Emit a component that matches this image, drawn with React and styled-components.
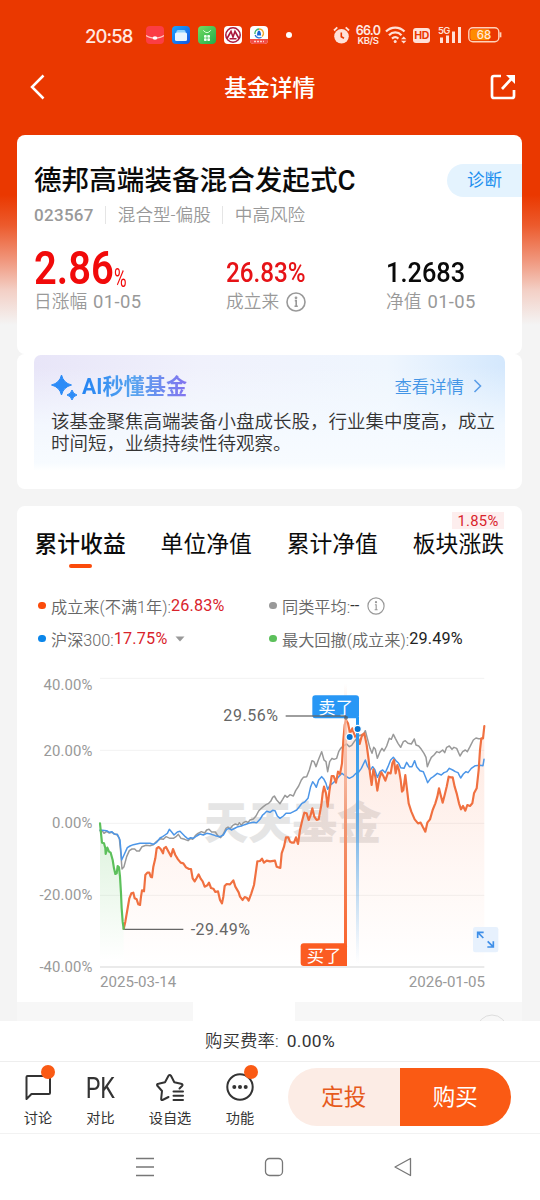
import React from "react";
import styled, { createGlobalStyle } from "styled-components";

const Global = createGlobalStyle`
  *{box-sizing:border-box}
  html,body{margin:0;padding:0;background:#f4f4f4}
  body{font-family:Roboto,"Noto Sans CJK SC",sans-serif;width:540px;height:1200px;overflow:hidden}
`;

const Phone = styled.div`
  width:540px;height:1200px;display:flex;flex-direction:column;overflow:hidden;
  background:linear-gradient(#ea3800 0,#ea3800 195px,#ec5a2c 225px,#f0967c 260px,#f3cfc5 290px,#f4f4f4 325px,#f4f4f4 100%);
`;
const StatusBar = styled.div`
  height:57px;flex:none;display:flex;align-items:center;padding:13px 38px 0 85px;color:#ffe9e2;
`;
const Clock = styled.div`
  width:61px;font:500 18.5px/24px Inter,sans-serif;letter-spacing:-.9px;white-space:nowrap;margin-top:1px;
`;
const AppIcons = styled.div`
  display:flex;gap:8px;align-items:center;
`;
const Dot = styled.i`
  display:block;width:6px;height:6px;border-radius:50%;background:#fff;margin-left:18px;
`;
const Signals = styled.div`
  display:flex;align-items:center;margin-left:auto;width:169px;
`;
const Speed = styled.div`
  display:flex;flex-direction:column;align-items:center;
  font:600 12.5px/11px Inter,sans-serif;letter-spacing:-.7px;width:26px;margin:0 4px 0 5px;
  small{font-size:9.5px;line-height:10px;letter-spacing:-.4px}
`;
const Header = styled.header`
  height:60px;flex:none;display:flex;align-items:center;justify-content:space-between;padding:0 24.5px 0 29px;
  color:#fff;
  h1{margin:3px 5px 0 0;font-size:22.8px;font-weight:500;line-height:30px}
`;
const Scroll = styled.main`
  flex:1;min-height:0;overflow:hidden;padding:17.5px 18px 0 17px;
`;
const Card = styled.section`
  width:505px;height:${p => p.$h}px;background:#fff;border-radius:${p => p.$r || "8px"};
  margin-bottom:${p => p.$gap || 0}px;overflow:hidden;
`;
const TitleRow = styled.div`
  display:flex;justify-content:space-between;align-items:flex-start;padding:29px 0 0 17px;
  h2{margin:0;font-size:27.6px;line-height:33px;font-weight:500;color:#0a0a0a;white-space:nowrap}
`;
const Diagnose = styled.div`
  width:75px;height:33px;border-radius:17px 0 0 17px;background:#e4f3fe;color:#1d8fee;
  font-size:17.5px;line-height:32px;padding-left:20px;
`;
const Meta = styled.div`
  display:flex;align-items:center;padding:8px 0 0 17px;height:28px;color:#999;line-height:20px;
  b{font-weight:500;letter-spacing:.3px;font-size:17px}
  span{border-left:1px solid #e5e5e5;margin-left:11.500px;padding-left:11.500px;height:18px;line-height:18px;font-size:17.6px;font-weight:350}
`;
const Stats = styled.div`
  display:grid;grid-template-columns:192px 160px 1fr;padding:19px 0 0 17px;
`;
const Figure = styled.div`
  height:46px;display:flex;align-items:flex-end;font-weight:${p => (p.$big ? 600 : 500)};
  color:${p => p.$color};
  font-size:${p => (p.$big ? 47 : 28.5)}px;line-height:${p => (p.$big ? 45 : 35)}px;
  span{display:block;transform-origin:0 50%;transform:scaleX(${p => p.$sx});white-space:nowrap}
  small{font-size:26px;line-height:24px;font-weight:400;margin-left:-14px;transform:scaleX(.66);transform-origin:0 50%}
`;
const Caption = styled.div`
  display:flex;align-items:center;gap:7px;color:#999;font-size:17.7px;line-height:22px;font-weight:350;white-space:nowrap;margin-top:1px;
  span{font-weight:400;font-size:18.4px;letter-spacing:.4px;margin-left:-1px}
`;
const AiPanel = styled.div`
  margin:1px 17px 0;height:116px;border-radius:7px 7px 0 0;padding:19px 0 0 17px;
  background:linear-gradient(rgba(255,255,255,0) 10%,rgba(245,250,255,.85) 60%,rgba(247,251,255,1) 93%,#fff),
   linear-gradient(90deg,#e8e5f8 0,#f0f1fc 35%,#eff6fe 75%,#d4e8fd);
`;
const AiHead = styled.div`
  display:flex;align-items:center;height:26px;
`;
const AiTitle = styled.div`
  margin-left:5px;font-size:21.2px;font-weight:700;line-height:26px;color:transparent;margin-top:1px;
  background:linear-gradient(90deg,#2484f3,#58a4ef 50%,#8373ef);background-clip:text;-webkit-background-clip:text;
`;
const More = styled.div`
  margin:-2px 23px 0 auto;display:flex;align-items:center;gap:9px;color:#4395e6;font-size:17.4px;font-weight:350;
`;
const AiText = styled.p`
  margin:11px 0 0;width:460px;font-size:18.5px;line-height:22px;color:#333;font-weight:350;white-space:nowrap;
`;
const Tabs = styled.div`
  display:flex;justify-content:space-between;padding:24.500px 18px 0 17.5px;height:66px;
`;
const Tab = styled.div`
  position:relative;font-size:22.8px;line-height:28px;color:#0b0b0b;font-weight:${p => (p.$on ? 500 : 400)};
  display:flex;flex-direction:column;align-items:center;
  i{width:23px;height:4px;border-radius:2px;background:#fb4b0b;margin-top:5.500px}
`;
const TabBadge = styled.em`
  position:absolute;right:0;top:-18.500px;width:52px;height:17px;background:#fdeeee;color:#d9232b;
  font:400 14.8px/18px Roboto,sans-serif;text-align:center;letter-spacing:.3px;
`;
const Legend = styled.div`
  display:grid;grid-template-columns:231px 1fr;grid-auto-rows:33px;align-items:center;padding:17px 0 0 21px;
`;
const LegendItem = styled.div`
  display:flex;align-items:center;color:#666;font-size:16.2px;font-weight:350;white-space:nowrap;
  &::before{content:"";width:7.500px;height:7.500px;border-radius:50%;background:${p => p.$dot};margin-right:5.500px}
  b{font-weight:400;color:${p => p.$value};letter-spacing:.2px}
  svg{margin-left:7px}
`;
const ChartBox = styled.div`
  display:flex;margin-top:15px;height:303px;
`;
const Axis = styled.div`
  width:78px;flex:none;display:flex;flex-direction:column;text-align:right;color:#999;font-size:14.9px;line-height:16px;
  padding:6.500px 2.500px 0 0;letter-spacing:.1px;
  span{height:72.2px;flex:none}
  span:first-child{height:66px}
  span:last-child{height:16px}
`;
const Plot = styled.div`
  width:410px;flex:none;margin-left:-5px;
  svg{display:block}
`;
const Dates = styled.div`
  display:flex;justify-content:space-between;padding:0 37px 0 83px;color:#999;font-size:15.1px;line-height:18px;
`;
const NextStrip = styled.div`
  width:505px;height:20px;display:flex;background:#f7f7f7;justify-content:space-between;
  &::before{content:"";width:102px;margin-left:176px;background:#fff}
  svg{margin-right:14px;margin-top:12px}
`;
const Fee = styled.div`
  height:41px;flex:none;background:#fff;text-align:center;font-size:17.4px;line-height:41px;color:#333;font-weight:350;
  border-bottom:1px solid #eee;letter-spacing:.1px;
  span{margin-left:8px;font-weight:400;letter-spacing:.3px}
`;
const ActionBar = styled.div`
  height:72px;flex:none;background:#fff;border-bottom:1px solid #f2f2f2;display:flex;padding:0 29px 0 3px;align-items:center;
`;
const Action = styled.div`
  position:relative;width:${p => p.$w || 70}px;display:flex;flex-direction:column;align-items:center;color:#333;
  font-size:14.2px;line-height:20px;gap:5px;margin-top:2px;
`;
const Pk = styled.div`
  height:34px;font-size:29px;line-height:39px;transform:scaleX(.8);
`;
const RedDot = styled.i`
  position:absolute;width:14px;height:14px;border-radius:50%;background:#fa5a14;top:-4.500px;left:${p => p.$x}px;
`;
const Buy = styled.div`
  margin:-1px 0 0 auto;width:223px;height:58px;border-radius:29px;overflow:hidden;display:flex;
  div{flex:1;background:#fcece5;color:#e65a1c;text-align:center;font-size:22.5px;line-height:58px}
  div + div{background:#fa5a14;color:#fff}
`;
const SystemNav = styled.nav`
  height:66px;flex:none;background:#fff;display:flex;align-items:center;justify-content:space-between;padding:0 127px 0 135px;
`;

const Info = ({ s = 20, w = 1.6 }) => (
  <svg width={s} height={s} viewBox="0 0 20 20" fill="none" stroke="#999" strokeWidth={w}>
    <circle cx="10" cy="10" r="9" /><path d="M8.8 8.6H10.2V14.2M8.5 14.2H11.8" /><circle cx="10" cy="5.8" r=".6" fill="#999" />
  </svg>
);

const AppIcon = ({ kind }) => (
  <svg width="18" height="18" viewBox="0 0 18 18">
    <defs>
      <linearGradient id="ic-blue" x1="0" y1="0" x2="1" y2="1"><stop stopColor="#1ba4ff" /><stop offset="1" stopColor="#1455e0" /></linearGradient>
      <linearGradient id="ic-green" x1="0" y1="0" x2="1" y2="1"><stop stopColor="#73dc62" /><stop offset="1" stopColor="#1fad4b" /></linearGradient>
    </defs>
    {kind === "wallet" && <><rect width="18" height="18" rx="4" fill="#fb3d44" /><path d="M0 9.5C4 13 14 13 18 9.5" fill="none" stroke="#ffc9c0" strokeWidth="1.2" /><ellipse cx="9" cy="12" rx="2.4" ry="1.8" fill="#fff" /></>}
    {kind === "files" && <><rect width="18" height="18" rx="4" fill="url(#ic-blue)" /><rect x="4.5" y="4" width="9" height="6" rx="1.5" fill="#8fd2ff" /><rect x="3" y="6.5" width="12" height="8.5" rx="1.5" fill="#e8f5ff" /></>}
    {kind === "store" && <><rect width="18" height="18" rx="4" fill="url(#ic-green)" /><path d="M5.2 4.3Q9 9 12.8 4.3" fill="none" stroke="#d8ffd4" /><g fill="#effff0"><rect x="6" y="9" width="2.7" height="2.7" rx=".8" /><rect x="9.3" y="9" width="2.7" height="2.7" rx=".8" /><rect x="6" y="12.3" width="2.7" height="2.7" rx=".8" /><rect x="9.3" y="12.3" width="2.7" height="2.7" rx=".8" /></g></>}
    {kind === "bank" && <><rect width="18" height="18" rx="4" fill="#fff" /><circle cx="9" cy="9" r="7.2" fill="none" stroke="#a9193d" strokeWidth="1.5" /><path d="M3 12.5L7 5.5 9 11 11 5.5 15 12.5M5.5 12.7H12.5" fill="none" stroke="#a9193d" strokeWidth="1.6" /></>}
    {kind === "fund" && <><rect width="18" height="18" rx="4" fill="#fff" /><path d="M0 13H18V14A4 4 0 0 1 14 18H4A4 4 0 0 1 0 14Z" fill="#f34d45" /><path d="M5 8A4.3 4.3 0 0 1 9 3" stroke="#3cb371" fill="none" strokeWidth="1.3" /><path d="M9 3A4.3 4.3 0 0 1 12 10.5" stroke="#f2a72e" fill="none" strokeWidth="1.3" /><path d="M5.2 9A4.3 4.3 0 0 0 11.5 11.3" stroke="#2573d9" fill="none" strokeWidth="1.3" /><path d="M9 4.500Q11 5 11 9.500H7Q7 5 9 4.500Z" fill="#1766d8" /><path d="M4 15.5H14" stroke="#ffd0ca" strokeWidth="1.5" strokeDasharray="2 1" /></>}
  </svg>
);

const Alarm = () => (
  <svg width="17" height="18" viewBox="0 0 17 18"><circle cx="8.5" cy="10.3" r="7.3" fill="#ffe1d8" /><path d="M1 4.5L4.3 1.3M16 4.5L12.7 1.3" stroke="#ffe1d8" strokeWidth="1.8" /><path d="M8.3 6.5V10.8L11 12.3" fill="none" stroke="#ea3800" strokeWidth="1.6" /></svg>
);
const Wifi = () => (
  <svg width="22" height="18" viewBox="0 0 22 18" fill="none" stroke="#ffe1d8" strokeWidth="2.2"><path d="M1 5.6C6 .3 14.5 .3 19.5 5.6M4 9.2C7.5 5.5 13 5.5 16.5 9.2M7 12.6Q10.2 9.7 13.4 12.6" /><circle cx="10.2" cy="15.5" r="1.5" fill="#ffe1d8" stroke="none" /><path d="M16 13.3L18.7 10.5 21.4 13.3ZM16 14.7L18.7 17.5 21.4 14.7Z" fill="#ffe1d8" stroke="none" /></svg>
);
const Hd = styled.div`
  width:17px;height:15px;border-radius:3px;background:#ffe1d8;color:#ea3800;font:700 10.5px/15px Inter,sans-serif;text-align:center;letter-spacing:-.5px;
  margin:0 8px 0 6px;
`;
const Bars = () => (
  <svg width="24" height="18" viewBox="0 0 24 18" fill="#ffe1d8"><text x="0" y="8" fontFamily="Inter" fontWeight="600" fontSize="9.5" letterSpacing="-.6">5G</text><rect x="2" y="11.5" width="3" height="5.5" /><rect x="8" y="9.5" width="3" height="7.5" /><rect x="14" y="5.5" width="3" height="11.5" /><rect x="20" y="1" width="3" height="16" /></svg>
);
const BatteryBox = styled.div`
  margin-left:auto;display:flex;
`;
const Battery = () => (
  <svg width="34" height="16" viewBox="0 0 34 16"><rect x=".8" y=".8" width="30" height="14" rx="4" fill="none" stroke="#ffd2b8" strokeWidth="1.4" /><path d="M5 2.3H21V13.3H5A2.7 2.7 0 0 1 2.3 10.6V5A2.7 2.7 0 0 1 5 2.3Z" fill="#ff8b00" /><path d="M32.5 5.3V10.3" stroke="#ffd2b8" strokeWidth="1.8" /><text x="16" y="12" textAnchor="middle" fontFamily="Inter" fontWeight="500" fontSize="11.5" fill="#ffe9dc">68</text></svg>
);

// Chart units are thirds of a pixel; y = 460 is the 0.00% line.
const fallLine = "30,460 33,490 36,518 42,520 46,535 47,552 52,533 57,545 62,548 68,570 72,595 76,612 80,610 83,588 87,592 90,620 93,670 95,715 98,755 101,777";
const fundLine = "101,777 106,755 112,720 118,685 124,670 130,668 134,685 140,688 145,703 150,705 153,680 156,661 162,664 166,615 172,608 178,608 182,620 186,622 190,590 196,565 200,535 206,531 212,537 219,550 222,535 228,531 234,542 243,559 249,537 256,555 264,568 272,578 280,580 288,592 297,597 303,597 308,625 314,634 320,624 326,613 332,626 338,634 344,650 352,646 357,638 363,654 370,656 376,666 384,664 390,690 396,700 400,680 404,648 410,642 420,643 430,631 436,650 446,667 450,680 458,690 464,681 470,683 476,692 484,670 492,645 497,610 502,574 510,573 516,566 522,578 530,572 540,574 555,572 560,590 571,594 575,550 582,530 588,502 595,502 600,515 606,518 612,518 618,502 624,522 630,480 637,450 643,428 650,430 656,450 662,435 667,415 673,440 680,450 686,448 694,405 698,370 702,350 708,370 713,410 718,365 725,318 731,318 738,338 744,305 750,312 756,280 760,210 764,165 768,150 774,160 780,190 787,175 795,200 802,195 809,222 816,195 823,190 830,225 836,270 840,310 845,345 850,298 856,320 862,362 868,325 874,307 880,318 886,332 894,308 902,310 907,280 912,270 917,310 922,285 927,300 932,330 936,365 940,360 946,315 950,350 956,400 964,425 974,448 984,460 992,458 999,472 1006,485 1012,458 1020,448 1028,420 1036,400 1042,380 1047,355 1052,375 1058,398 1064,375 1070,350 1076,320 1082,322 1088,322 1094,350 1100,370 1107,400 1113,418 1119,408 1126,422 1132,405 1140,408 1147,400 1152,370 1160,355 1166,300 1170,240 1174,205 1179,205 1183,168";
const peerLine = "30,482 38,484 42,490 50,484 58,489 66,487 74,492 82,495 88,505 92,545 96,597 102,590 110,560 118,542 126,537 134,537 140,543 148,543 156,530 168,526 180,527 190,524 200,514 212,506 220,508 228,500 240,505 250,505 258,500 265,493 273,505 284,508 294,512 302,505 308,508 316,497 324,490 334,485 344,489 350,480 357,478 365,486 376,486 384,498 392,503 400,492 408,475 414,471 420,477 428,466 436,462 444,465 448,458 454,466 460,458 468,454 474,458 480,450 490,447 498,438 506,423 514,415 520,410 528,404 536,400 542,394 548,382 553,378 560,390 570,401 578,388 585,376 592,382 600,374 610,378 617,362 626,348 634,330 640,322 650,320 658,300 666,272 672,275 678,290 685,270 695,245 702,270 708,275 713,305 719,275 726,265 732,268 740,265 746,245 752,235 760,228 770,222 778,230 785,226 792,216 800,205 810,195 818,198 826,182 832,205 840,235 846,250 851,232 856,238 862,265 870,245 876,235 882,243 890,228 898,205 904,208 910,193 916,205 924,220 932,232 940,215 946,212 954,220 964,222 973,207 978,225 986,228 994,238 1002,250 1008,262 1012,290 1018,275 1024,262 1032,255 1040,245 1048,248 1058,240 1064,248 1070,232 1078,228 1086,238 1092,232 1100,235 1110,258 1118,245 1126,240 1132,245 1140,230 1150,210 1158,204 1166,206 1176,206";
const indexLine = "30,480 50,482 58,487 66,485 72,492 82,493 90,510 95,570 102,555 112,533 120,528 130,524 150,520 180,520 190,523 200,517 210,504 218,500 225,495 232,490 238,478 245,486 252,495 262,486 270,484 278,492 286,500 294,507 302,503 310,505 320,498 330,492 340,495 350,490 362,492 376,497 390,500 400,495 410,478 418,475 424,480 436,474 444,470 454,468 464,464 476,460 490,457 500,458 510,448 518,435 524,430 530,424 540,427 548,421 555,422 562,438 570,445 580,438 588,430 600,430 612,424 620,420 628,410 636,400 644,396 654,385 662,350 668,335 674,343 679,352 686,330 695,320 702,328 708,340 713,358 720,345 728,340 736,332 746,320 756,310 766,318 778,325 788,320 798,310 806,306 814,295 826,270 832,288 840,302 848,290 854,298 862,322 870,305 878,300 886,308 894,290 902,270 910,262 918,272 926,280 932,293 942,295 950,277 958,290 966,290 974,272 980,290 990,302 1000,305 1008,325 1013,338 1022,325 1030,320 1042,310 1054,315 1062,308 1070,305 1078,295 1088,300 1096,305 1104,308 1112,324 1120,312 1128,305 1134,308 1144,295 1156,287 1170,286 1179,287 1182,268";

const Chart = () => (
  <svg width="410" height="307" viewBox="0 0 1230 921" fontFamily='Roboto,"Noto Sans CJK SC",sans-serif'>
    <defs>
      <linearGradient id="fill-fund" gradientUnits="userSpaceOnUse" x1="0" y1="150" x2="0" y2="890"><stop stopColor="#fb5c22" stopOpacity=".14" /><stop offset=".6" stopColor="#fb5c22" stopOpacity=".05" /><stop offset="1" stopColor="#fb5c22" stopOpacity="0" /></linearGradient>
      <linearGradient id="fill-fall" gradientUnits="userSpaceOnUse" x1="0" y1="460" x2="0" y2="870"><stop stopColor="#5cc45c" stopOpacity=".22" /><stop offset="1" stopColor="#5cc45c" stopOpacity="0" /></linearGradient>
      <linearGradient id="bar-buy" gradientUnits="userSpaceOnUse" x1="0" y1="40" x2="0" y2="888"><stop stopColor="#f9cdbd" stopOpacity="0" /><stop offset=".15" stopColor="#f8c2ae" stopOpacity=".7" /><stop offset=".5" stopColor="#f19672" /><stop offset="1" stopColor="#fb5c22" /></linearGradient>
      <linearGradient id="bar-sell" gradientUnits="userSpaceOnUse" x1="0" y1="140" x2="0" y2="880"><stop stopColor="#2196f3" /><stop offset=".4" stopColor="#459ee6" stopOpacity=".85" /><stop offset="1" stopColor="#7fbdf0" stopOpacity="0" /></linearGradient>
    </defs>
    {[25, 241, 460, 676].map(y => <path key={y} d={`M30 ${y}H1183`} stroke="#f2f2f2" strokeWidth="3" />)}
    <text x="342" y="507" fontSize="133" fontWeight="900" fill="#e5e5e5" textLength="532" lengthAdjust="spacingAndGlyphs">天天基金</text>
    <polygon points={`${fundLine} 1183,890 101,890`} fill="url(#fill-fund)" />
    <polygon points={`${fallLine} 101,870 30,870`} fill="url(#fill-fall)" />
    <path d="M30 891H1183" stroke="#d5d5d5" strokeWidth="3" />
    <g fill="none" strokeLinejoin="round" strokeLinecap="round">
      <polyline points={peerLine} stroke="#999" strokeWidth="4.5" />
      <polyline points={indexLine} stroke="#4c96e8" strokeWidth="4.5" />
      <polyline points={fundLine} stroke="#f07040" strokeWidth="6.5" />
      <polyline points={fallLine} stroke="#5cc05b" strokeWidth="6.5" />
    </g>
    <path d="M103 778H280" stroke="#666" strokeWidth="4" />
    <text x="302" y="794" fontSize="48" fill="#666" textLength="178">-29.49%</text>
    <text x="400" y="154" fontSize="48" fill="#666" textLength="164">29.56%</text>
    <rect x="762" y="40" width="9" height="848" fill="url(#bar-buy)" />
    <rect x="798" y="140" width="9" height="740" fill="url(#bar-sell)" />
    <rect x="667" y="76" width="140" height="69" rx="9" fill="#2897f5" />
    <text x="685" y="131" fontSize="52" fill="#fff" textLength="104">卖了</text>
    <path d="M587 138H768" stroke="#666" strokeOpacity=".85" strokeWidth="4.5" /><circle cx="768" cy="143" r="6" fill="#555" fillOpacity=".7" />
    <rect x="632" y="820" width="139" height="68" rx="9" fill="#fb5c22" />
    <text x="650" y="875" fontSize="52" fill="#fff" textLength="104">买了</text>
    <g fill="#0874cf" stroke="#fff" strokeWidth="4"><circle cx="779" cy="201" r="11" /><circle cx="803" cy="177" r="11" /></g>
    <rect x="1149" y="771" width="76" height="76" rx="7" fill="#e7f1fd" />
    <path d="M1163 804V787H1181M1164 788L1180 804M1192 831H1210V814M1209 830L1193 814" fill="none" stroke="#3f8fe8" strokeWidth="5" />
  </svg>
);

export default function App() {
  return (
    <>
      <Global />
      <Phone>
        <StatusBar>
          <Clock>20:58</Clock>
          <AppIcons>{["wallet", "files", "store", "bank", "fund"].map(k => <AppIcon key={k} kind={k} />)}</AppIcons>
          <Dot />
          <Signals><Alarm /><Speed><span>66.0</span><small>KB/S</small></Speed><Wifi /><Hd>HD</Hd><Bars /><BatteryBox><Battery /></BatteryBox></Signals>
        </StatusBar>
        <Header>
          <svg width="26" height="26" viewBox="0 0 26 26" fill="none" stroke="#fff" strokeWidth="2.5"><path d="M14.5 1.5L3 13 14.5 24.5" /></svg>
          <h1>基金详情</h1>
          <svg width="26" height="26" viewBox="0 0 26 26" fill="none" stroke="#fff" strokeWidth="2.7"><path d="M11 2H4Q2 2 2 4V22Q2 24 4 24H22Q24 24 24 22V16M12 15L23 3" /><path d="M16 1H25V10Z" fill="#fff" stroke="none" /></svg>
        </Header>
        <Scroll>
          <Card $h={219}>
            <TitleRow><h2>德邦高端装备混合发起式C</h2><Diagnose>诊断</Diagnose></TitleRow>
            <Meta><b>023567</b><span>混合型-偏股</span><span>中高风险</span></Meta>
            <Stats>
              <div><Figure $big $color="#f10a0a" $sx={0.85}><span>2.86</span><small>%</small></Figure><Caption>日涨幅 <span>01-05</span></Caption></div>
              <div><Figure $color="#e61317" $sx={0.85}><span>26.83%</span></Figure><Caption>成立来<Info /></Caption></div>
              <div><Figure $color="#0a0a0a" $sx={0.89}><span>1.2683</span></Figure><Caption>净值 <span>01-05</span></Caption></div>
            </Stats>
          </Card>
          <Card $h={135.5} $gap={17}>
            <AiPanel>
              <AiHead>
                <svg width="26" height="26" viewBox="0 0 26 26" fill="#2d8cf7"><path d="M10.5 1Q12.5 9 20.5 11 12.5 13 10.5 21 8.500 13 .5 11 8.500 9 10.500 1ZM21 16Q22 20 26 21 22 22 21 26 20 22 16 21 20 20 21 16Z" stroke="#2d8cf7" strokeLinejoin="round" /></svg>
                <AiTitle>AI秒懂基金</AiTitle>
                <More>查看详情<svg width="9" height="14" viewBox="0 0 9 14" fill="none" stroke="#5b9ee8" strokeWidth="1.6"><path d="M1.500 1L7.500 7 1.500 13" /></svg></More>
              </AiHead>
              <AiText>该基金聚焦高端装备小盘成长股，行业集中度高，成立<br />时间短，业绩持续性待观察。</AiText>
            </AiPanel>
          </Card>
          <Card $h={496} $r="8px 8px 0 0">
            <Tabs>
              <Tab $on>累计收益<i /></Tab><Tab>单位净值</Tab><Tab>累计净值</Tab><Tab>板块涨跌<TabBadge>1.85%</TabBadge></Tab>
            </Tabs>
            <Legend>
              <LegendItem $dot="#fb4b0b" $value="#d9232b">成立来(不满1年):<b>26.83%</b></LegendItem>
              <LegendItem $dot="#999" $value="#333">同类平均:<b>--</b><Info s={18} w={1.3} /></LegendItem>
              <LegendItem $dot="#0b86ea" $value="#d9232b">沪深300:<b>17.75%</b><svg width="12" height="8" viewBox="0 0 12 8"><path d="M1.500 1.500H10.500L6 6.500Z" fill="#999" /></svg></LegendItem>
              <LegendItem $dot="#5cc05b" $value="#222">最大回撤(成立来):<b>29.49%</b></LegendItem>
            </Legend>
            <ChartBox>
              <Axis><span>40.00%</span><span>20.00%</span><span>0.00%</span><span>-20.00%</span><span>-40.00%</span></Axis>
              <Plot><Chart /></Plot>
            </ChartBox>
            <Dates><span>2025-03-14</span><span>2026-01-05</span></Dates>
          </Card>
          <NextStrip><svg width="32" height="10" viewBox="0 0 32 10"><circle cx="16" cy="16" r="15" fill="none" stroke="#ddd" /></svg></NextStrip>
        </Scroll>
        <Fee>购买费率:<span>0.00%</span></Fee>
        <ActionBar>
          <Action>
            <svg width="28" height="34" viewBox="0 0 28 34" fill="none" stroke="#333" strokeWidth="2" strokeLinejoin="round"><path d="M2.500 30V8Q2.500 7 3.500 7H25Q26 7 26 8V24Q26 25 25 25H7.500Z" /></svg>
            讨论<RedDot $x={38} />
          </Action>
          <Action $w={55}><Pk>PK</Pk>对比</Action>
          <Action $w={84}>
            <svg width="30" height="34" viewBox="0 0 30 34" fill="none" stroke="#333" strokeWidth="2" strokeLinejoin="round" strokeLinecap="round"><path d="M13.500 28L7.500 31Q6 31.500 6.200 29.500L7 22 2.200 16.500Q1.500 15 3.500 14.700L10 13.300 13.500 6.800Q14.700 5 16 6.800L19.300 13.300 26 14.700Q28.500 15.300 27 17L24.500 19.500" /><path d="M18.500 22.500H28M18.500 26.700H28M18.500 31H28" /></svg>
            设自选
          </Action>
          <Action $w={56}>
            <svg width="28" height="34" viewBox="0 0 28 34" fill="none" stroke="#333" strokeWidth="2"><circle cx="14" cy="18" r="12.700" /><g fill="#333" stroke="none"><circle cx="8.300" cy="18" r="2" /><circle cx="14" cy="18" r="2" /><circle cx="19.700" cy="18" r="2" /></g></svg>
            功能<RedDot $x={32} />
          </Action>
          <Buy><div>定投</div><div>购买</div></Buy>
        </ActionBar>
        <SystemNav>
          <svg width="20" height="20" viewBox="0 0 20 20" stroke="#777" strokeWidth="1.300"><path d="M1 1.500H19M1 10H19M1 18.500H19" /></svg>
          <svg width="20" height="20" viewBox="0 0 20 20" fill="none" stroke="#777" strokeWidth="1.300"><rect x="1.500" y="1.500" width="17" height="17" rx="4" /></svg>
          <svg width="20" height="20" viewBox="0 0 20 20" fill="none" stroke="#777" strokeWidth="1.300" strokeLinejoin="round"><path d="M17.500 1.500V18.500L2 10Z" /></svg>
        </SystemNav>
      </Phone>
    </>
  );
}
